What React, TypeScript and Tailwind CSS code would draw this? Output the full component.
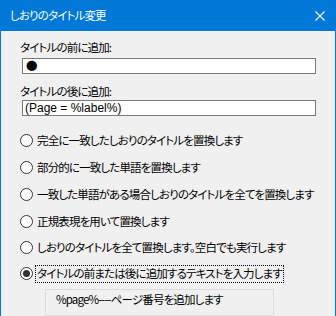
import { type ReactNode } from "react";

const FONT =
  "font-['Noto_Sans_CJK_JP','Noto_Sans',sans-serif] [font-feature-settings:'palt'] text-[11.5px] tracking-[-0.85px] whitespace-nowrap";

const OPTIONS = [
  { label: "完全に一致したしおりのタイトルを置換します", h: "h-[27px]" },
  { label: "部分的に一致した単語を置換します", h: "h-[27px]" },
  { label: "一致した単語がある場合しおりのタイトルを全てを置換します", h: "h-[27px]" },
  { label: "正規表現を用いて置換します", h: "h-[27px]" },
  { label: "しおりのタイトルを全て置換します。空白でも実行します", h: "h-[26px]" },
  { label: "タイトルの前または後に追加するテキストを入力します", h: "h-[26px]", checked: true },
];

function Radio({ checked, children, h }: { checked?: boolean; children: ReactNode; h: string }) {
  return (
    <div className={`flex items-center pl-[19px] ${h}`}>
      <span className="flex h-[13px] w-[13px] shrink-0 items-center justify-center rounded-full border border-[#333] bg-white">
        {checked ? <span className="h-[7px] w-[7px] rounded-full bg-[#333]" /> : null}
      </span>
      <span
        className={`ml-[2px] flex h-[18px] items-center px-px leading-none ${
          checked ? "border border-dotted border-black" : "border border-transparent"
        }`}
      >
        {children}
      </span>
    </div>
  );
}

export default function App() {
  return (
    <div className={`h-[316px] w-[336px] overflow-hidden bg-[#f0f0f0] text-black ${FONT}`}>
      <div className="flex h-[31px] items-center justify-between bg-[#0078d7] pl-[10px] pr-[11px] text-white">
        <span className="leading-none">しおりのタイトル変更</span>
        <svg width="10" height="10" viewBox="0 0 10 10">
          <path d="M0.5 0.5 L9.5 9.5 M9.5 0.5 L0.5 9.5" stroke="white" strokeWidth="1.1" />
        </svg>
      </div>

      <div className="flex h-[285px] flex-col border-x border-[#0078d7]">
        <div className="mt-[9px] flex h-[18px] items-center pl-[19px] leading-none">タイトルの前に追加:</div>
        <div className="ml-[21px] mt-[2px] flex h-[18px] w-[294px] items-center border border-[#7a7a7a] bg-white pl-[3px] leading-none">
          ●
        </div>

        <div className="mt-[10px] flex h-[18px] items-center pl-[19px] leading-none">タイトルの後に追加:</div>
        <div className="ml-[21px] flex h-[18px] w-[294px] items-center border border-[#7a7a7a] bg-white pl-[2px] font-['Liberation_Sans',sans-serif] text-[12px] leading-none tracking-normal">
          (Page = %label%)
        </div>

        <div className="mt-[11px] flex flex-col">
          {OPTIONS.map((o) => (
            <Radio key={o.label} checked={o.checked} h={o.h}>
              {o.label}
            </Radio>
          ))}
        </div>

        <div className="ml-[44px] mt-[2px] h-[30px] w-[229px] border border-[#dcdcdc] pl-[10px] pt-[4px] leading-none">
          %page%----ページ番号を追加します
        </div>
      </div>
    </div>
  );
}
